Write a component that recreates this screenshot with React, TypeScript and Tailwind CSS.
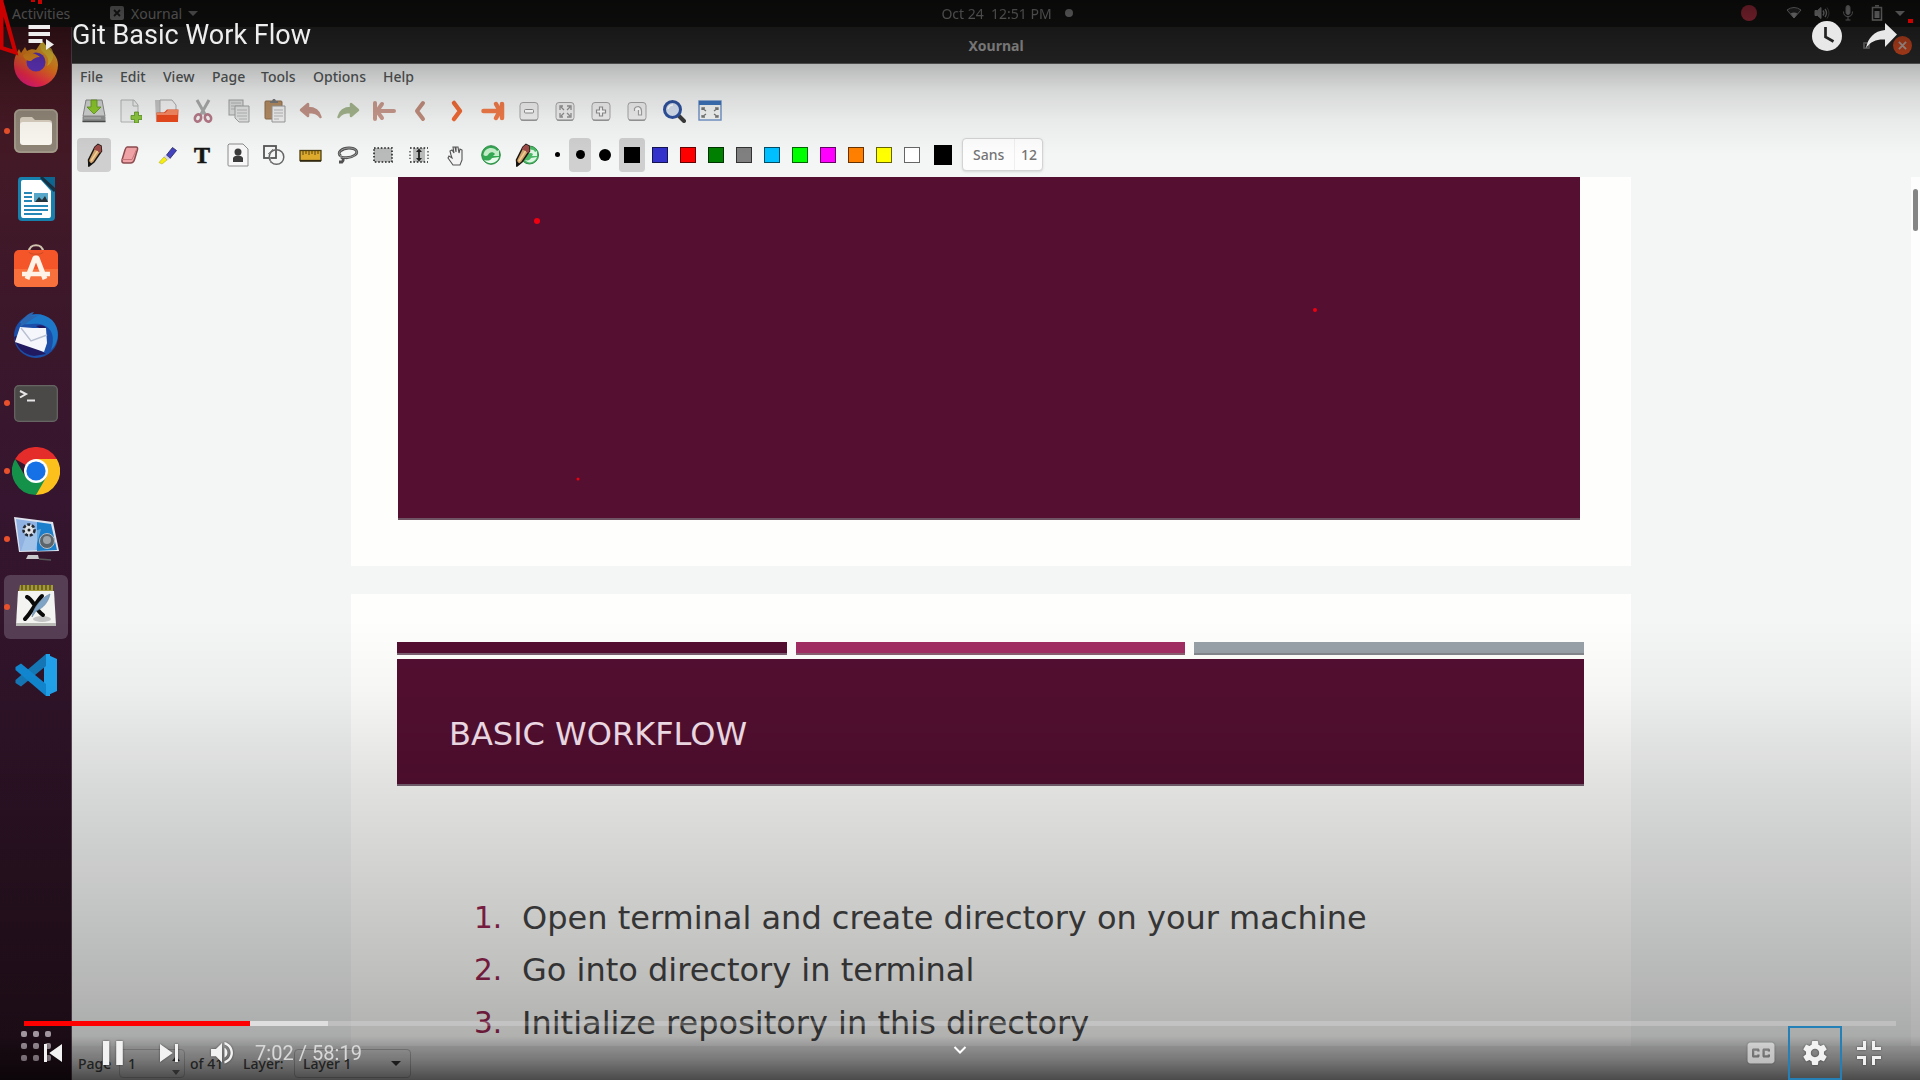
import React from "react";

type Kids = { children?: React.ReactNode };

/* ---------- dock ---------- */

const S = ({ size = 48, box = "0 0 48 48", children }: Kids & { size?: number; box?: string }) => (
  <svg width={size} height={size} viewBox={box} fill="none" className="shrink-0">
    {children}
  </svg>
);

const Firefox = () => (
  <S>
    <defs>
      <linearGradient id="ff" x1="0.8" y1="0" x2="0.3" y2="1">
        <stop offset="0" stopColor="#ffe14a" />
        <stop offset="0.45" stopColor="#ff8a1e" />
        <stop offset="0.8" stopColor="#ff2d50" />
        <stop offset="1" stopColor="#e01a80" />
      </linearGradient>
    </defs>
    <path d="M30 2c3 2 4 5 5 7 6 4 11 9 11 17a22 22 0 0 1-44 0c0-7 2-11 5-16l2 4 4-6 2 4c3-2 7-2 9-1 2-3 4-6 6-9z" fill="url(#ff)" />
    <circle cx="24" cy="23" r="9.5" fill="#6a3ad0" />
    <path d="M11 16c6-4 12-2 17 2-4 0-7 2-9 4-4 0-7-2-8-6z" fill="#ff9a22" />
    <path d="M30 3c-3 5-1 9 3 12 4 4 4 8 2 12 5-3 9-11 4-18-3-1-7-3-9-6z" fill="#ffd93a" opacity=".75" />
  </S>
);

const Files = () => (
  <S>
    <rect x="2" y="2" width="44" height="44" rx="6" fill="#8f8577" />
    <rect x="3" y="3" width="42" height="42" rx="5" fill="none" stroke="#a69d8e" strokeWidth="1.5" />
    <path d="M8 13q0-3 3-3h9l3 3h14q3 0 3 3v4H8z" fill="#d9cfc0" />
    <rect x="8" y="15" width="32" height="23" rx="3" fill="#fbf7f1" />
  </S>
);

const Writer = () => (
  <S>
    <path d="M9 2h22l12 13v27q0 4-4 4H10q-4 0-4-4V6q0-4 3-4z" fill="#1880ac" />
    <path d="M11 5h18l10 11v24q0 3-2 3H11q-2 0-2-3V7q0-2 2-2z" fill="#fff" />
    <path d="M31 2h12v11z" fill="#0d6690" />
    <path d="M29 2l14 14" stroke="#133244" strokeWidth="3" />
    <path d="M12 18h8M12 22h8M12 26h8M12 31h24M12 35h24M12 39h18" stroke="#2487b5" strokeWidth="2" />
    <rect x="22" y="18" width="14" height="9" fill="#57a8c8" />
    <path d="M23 27l4-5 3 3 3-4 3 6z" fill="#26343a" />
  </S>
);

const Software = () => (
  <S>
    <path d="M17 9c0-9 14-9 14 0" stroke="#cfc4ae" strokeWidth="2.2" />
    <rect x="2" y="7" width="44" height="37" rx="5" fill="#f4562a" />
    <path d="M2 26h44v13q0 5-5 5H7q-5 0-5-5z" fill="#f8713d" />
    <path d="M17 9c0 3 14 3 14 0" stroke="#c94a22" strokeWidth="1" />
    <path d="M15 36L23 15h2l8 21" stroke="#fff2e6" strokeWidth="5" strokeLinejoin="round" />
    <path d="M10 31h28" stroke="#fff2e6" strokeWidth="4.5" />
  </S>
);

const Thunderbird = () => (
  <S>
    <circle cx="24" cy="25" r="22" fill="#1b4ea8" />
    <path d="M8 12C14 2 30 0 40 9c8 8 8 22-1 30 4-11 2-22-8-25-8-3-15 1-23-2z" fill="#1d78c8" />
    <path d="M2 26c2 10 10 18 20 19l12-2-30-18z" fill="#221a60" />
    <path d="M24 15q8-2 10 2v4z" fill="#221a60" />
    <path d="M8 16l13 1 13 0 1 15-3 9L3 31z" fill="#f5f6fb" />
    <path d="M9 17l10 13 16-6" stroke="#b8bfd0" strokeWidth="1.4" />
    <path d="M8 16c2-9 8-14 14-15l-3 4c3 0 6-1 8-1-6 3-10 7-19 12z" fill="#2b66b0" />
  </S>
);

const Terminal = () => (
  <S>
    <rect x="2" y="6" width="44" height="37" rx="5" fill="#4b4948" />
    <rect x="2.7" y="6.7" width="42.6" height="35.6" rx="4.5" stroke="#676564" strokeWidth="1.2" />
    <path d="M8 12l6 3-6 3.500M15 21.500h8" stroke="#e6e6e6" strokeWidth="2" />
  </S>
);

const Chrome = () => (
  <S>
    <path d="M24 24L3.200 12A24 24 0 0 1 44.800 12z" fill="#e42c2b" />
    <path d="M24 24V12h20.800A24 24 0 0 1 24 48z" fill="#fcc01d" />
    <path d="M24 24L13.600 30 3.200 12A24 24 0 0 0 24 48l10.400-18z" fill="#15924a" />
    <circle cx="24" cy="24" r="12" fill="#fff" />
    <circle cx="24" cy="24" r="9.600" fill="#1671e6" />
  </S>
);

const Recorder = () => (
  <S>
    <path d="M2 2l39 5 6 29-40 1z" fill="#dfe3ee" />
    <path d="M4 4l21 3v28l-17 1z" fill="#8fb2e2" />
    <path d="M25 7l14 2 6 26-20 1z" fill="#1b7fcb" />
    <path d="M15 18l14-4-6 22H9z" fill="#b5d3f0" opacity=".5" />
    <circle cx="17" cy="15" r="5.500" fill="#dfe3e8" stroke="#232a33" strokeWidth="2.600" strokeDasharray="3 1.700" />
    <circle cx="17" cy="15" r="1.500" fill="#222" />
    <circle cx="35" cy="26" r="7.500" fill="#5c646c" stroke="#b9c0c6" />
    <circle cx="35" cy="25" r="4" fill="#9da5ab" />
    <path d="M16 40h10l1 4H14z" fill="#c9c9cc" />
    <path d="M27 44l12 1" stroke="#555" strokeWidth="1.500" />
  </S>
);

const XournalIcon = () => (
  <S>
    <path d="M6 8h36l2 34H4z" fill="#f3f3f2" />
    <path d="M4 40h40v3H4z" fill="#b9b9b6" />
    <path d="M8 2h33v6H7z" fill="#a59a3a" />
    <path d="M10 2v5M14 2v5M18 2v5M22 2v5M26 2v5M30 2v5M34 2v5M38 2v5" stroke="#575018" strokeWidth="1.400" />
    <ellipse cx="30" cy="36" rx="9" ry="3" fill="#c4c4c4" />
    <path d="M15 14c6 2 9 14 16 18M30 13c-6 6-10 16-17 23" stroke="#0a0a0a" strokeWidth="4" strokeLinecap="round" />
    <path d="M38 11c-2 9-7 14-14 17l-4 6c1-9 9-19 18-23z" fill="#7fa3c4" stroke="#6c8cab" strokeWidth=".7" />
  </S>
);

const VSCode = () => (
  <S>
    <path d="M34 3l11 5v32l-11 5-2-9V12z" fill="#22a4ee" />
    <path d="M34 3v12L9 35.500 3.500 32v-3z" fill="#1579b8" />
    <path d="M34 45V33L9 12.500 3.500 16v3z" fill="#1289d2" />
    <path d="M34 3v42l4 0V3z" fill="#22a4ee" />
  </S>
);

const dock: { icon: React.FC; dot?: boolean; active?: boolean }[] = [
  { icon: Firefox },
  { icon: Files, dot: true },
  { icon: Writer },
  { icon: Software },
  { icon: Thunderbird },
  { icon: Terminal, dot: true },
  { icon: Chrome, dot: true },
  { icon: Recorder, dot: true },
  { icon: XournalIcon, dot: true, active: true },
  { icon: VSCode },
];

const Dock = () => (
  <div className="flex w-[72px] shrink-0 flex-col border-r border-[#5f4a5a] bg-linear-to-b from-[#481a22] via-[#35152f] via-45% to-[#27121e] pt-[2px]">
    {dock.map(({ icon: Icon, dot, active }, i) => (
      <div key={i} className="flex h-[68px] w-full shrink-0 items-center justify-center">
        <div className={active ? "relative flex size-16 items-center justify-center rounded-md bg-[#563f54]" : "relative flex size-16 items-center justify-center"}>
          {dot && <span className="absolute top-[29px] left-0 size-1.5 rounded-full bg-[#e9502c]" />}
          <Icon />
        </div>
      </div>
    ))}
    <div className="mt-auto mb-[19px] grid grid-cols-3 gap-[6px] self-center">
      {Array.from({ length: 9 }, (_, i) => (
        <span key={i} className="size-1.5 rounded-[2px] bg-[#e6d6e2]" />
      ))}
    </div>
  </div>
);

/* ---------- toolbars ---------- */

const I = ({ children, dim }: Kids & { dim?: boolean }) => (
  <svg viewBox="0 0 24 24" fill="none" className={dim ? "size-6 opacity-60" : "size-6"}>
    {children}
  </svg>
);

const ZoomTile = ({ children }: Kids) => (
  <I>
    <rect x="3" y="3.500" width="18" height="18" rx="3" fill="#ececec" stroke="#a4a4a4" />
    <path d="M4 21h16" stroke="#888" />
    {children}
  </I>
);

const mainIcons: React.ReactNode[] = [
  <I>
    <path d="M4 1h16l3 16H1z" fill="#cfd1d0" stroke="#8a8a8a" />
    <rect x="0.500" y="17" width="23" height="6" rx="1" fill="#8f9190" />
    <path d="M0.500 22.500h23" stroke="#4c4e4e" strokeWidth="1.500" />
    <path d="M2 19h17" stroke="#bbb" />
    <path d="M9 1h6v7h4l-7 7-7-7h4z" fill="#8bc72c" stroke="#5d9415" strokeWidth=".8" />
  </I>,
  <I>
    <path d="M3 1h13l4 5v17H3z" fill="#eceeed" stroke="#b2b4b3" />
    <path d="M15 1v6h5" stroke="#b2b4b3" />
    <path d="M16.500 13h4v3.500H24v4h-3.500V24h-4v-3.500H13v-4h3.500z" fill="#8cc63f" stroke="#4e8a12" strokeWidth=".7" />
  </I>,
  <I>
    <path d="M0 1h7v22H1z" fill="#c4c4c4" />
    <path d="M5 1h12l4 5v8H5z" fill="#f2f2f2" stroke="#aaa" />
    <path d="M1.500 13.500H9l3-3h11.500L23 23H1.500z" fill="#ea4a1e" />
    <path d="M2 14h8l3-3h10l-.5 5H2z" fill="#f78a62" />
  </I>,
  <I dim>
    <path d="M6 1l9 16M18 1L9 17" stroke="#777" strokeWidth="3" />
    <ellipse cx="7" cy="19" rx="3" ry="3.700" stroke="#8c2740" strokeWidth="2.600" transform="rotate(20 7 19)" />
    <ellipse cx="17" cy="19" rx="3" ry="3.700" stroke="#8c2740" strokeWidth="2.600" transform="rotate(-20 17 19)" />
  </I>,
  <I dim>
    <rect x="2" y="1" width="14" height="15" fill="#c9cbca" stroke="#666" />
    <path d="M4 4h10M4 7h10M4 10h4" stroke="#888" />
    <path d="M8 7h14v16H12l-4-4z" fill="#d5d7d6" stroke="#666" />
    <path d="M10 11h10M10 14h10M10 17h10M12 20h8" stroke="#888" />
  </I>,
  <I>
    <rect x="2" y="2" width="17" height="18" rx="1" fill="#b28b62" stroke="#8d6d4c" />
    <path d="M7 4V2h2l1-2h2l1 2h2v2z" fill="#777" />
    <path d="M9 7h13v16H9z" fill="#eeefee" stroke="#999" />
    <path d="M11 11h9M11 14h9M11 17h9M11 20h5" stroke="#b5b5b5" />
  </I>,
  <I>
    <path d="M2 11L9 5v4c8 0 11 3 12.500 9-2-3-5-5-12.500-5v4z" fill="#c09186" stroke="#c09186" strokeWidth="2.500" strokeLinejoin="round" />
  </I>,
  <I>
    <path d="M22 11L15 5v4C7 9 4 12 2.500 18c2-3 5-5 12.500-5v4z" fill="#a3b38c" stroke="#a3b38c" strokeWidth="2.500" strokeLinejoin="round" />
  </I>,
  <I>
    <path d="M3 4v16M10 5L5 12l5 7M6 12h16" stroke="#c7988c" strokeWidth="4" strokeLinecap="round" strokeLinejoin="round" />
  </I>,
  <I>
    <path d="M15 4l-6 8 6 8" stroke="#bf8c7c" strokeWidth="4" strokeLinecap="round" strokeLinejoin="round" />
  </I>,
  <I>
    <path d="M10 4l6 8-6 8" stroke="#ee6a35" strokeWidth="4.500" strokeLinecap="round" strokeLinejoin="round" />
  </I>,
  <I>
    <path d="M21 5v14M15 5l4 7-4 7M2.500 12H17" stroke="#f07a48" strokeWidth="4.500" strokeLinecap="round" strokeLinejoin="round" />
  </I>,
  <ZoomTile>
    <rect x="7.500" y="10.500" width="9" height="3.500" rx="1" fill="#fff" stroke="#8f8f8f" />
  </ZoomTile>,
  <ZoomTile>
    <path d="M7 11V7h3M14 7h4v4M18 14v4h-4M10 18H7v-4M8 8l3 3M17 8l-3 3M17 17l-3-3M8 17l3-3" stroke="#8f8f8f" strokeWidth="1.300" />
  </ZoomTile>,
  <ZoomTile>
    <path d="M10.500 8h3v3h3v3h-3v3h-3v-3h-3v-3h3z" fill="#fff" stroke="#8f8f8f" strokeWidth="1.200" />
  </ZoomTile>,
  <ZoomTile>
    <path d="M9.500 12V9.500q1-2 4-2 3 1 3 4.500v4h-3v-5" fill="#fff" stroke="#a0a0a0" strokeWidth="1.200" />
  </ZoomTile>,
  <I>
    <path d="M16 16l6 6" stroke="#3b3b3b" strokeWidth="4" strokeLinecap="round" />
    <circle cx="10.500" cy="10.500" r="8" fill="#d5dfee" stroke="#2f529d" strokeWidth="3" />
    <path d="M6 10q1-4 5-4" stroke="#fff" strokeWidth="1.500" />
  </I>,
  <I>
    <rect x="1" y="2" width="22" height="19" fill="#f2f4f4" stroke="#6b8fc4" strokeWidth="1.400" />
    <rect x="1" y="2" width="22" height="4" fill="#3d72b8" />
    <path d="M4 11V9h3M4 9l4 3M20 11V9h-3M20 9l-4 3M4 16v2h3M4 18l4-3M20 16v2h-3M20 18l-4-3" stroke="#777" strokeWidth="1.300" />
  </I>,
];

const Pencil = () => (
  <>
    <path d="M13 4l3-2.500 3 1.500.5 5L12 19l-5 4-.5-6z" fill="#cfa06a" stroke="#1d1712" strokeWidth="1.500" />
    <path d="M13 4l3-2.500 3 1.500.5 5-1.500 2-6-4z" fill="#9c4a48" />
    <path d="M6.500 18l3.500 3-4 2.500z" fill="#111" />
    <path d="M15.500 8L9 18" stroke="#f0cf94" strokeWidth="1.500" />
  </>
);

const toolIcons: React.ReactNode[] = [
  <I>
    <Pencil />
  </I>,
  <I>
    <path d="M9 4h9q2 0 1.500 2.500l-3 10q-1 3.500-4 3.500H6q-2.500 0-2-3l3-10q1-3 2-3z" fill="#efa3a6" stroke="#8c4b4f" strokeWidth="1.500" />
    <path d="M4 16.500h10l4.500-10" stroke="#c8757a" />
  </I>,
  <I>
    <path d="M12.500 12l6-7.500 4 3-6.500 8z" fill="#4444c0" stroke="#23235f" strokeWidth=".8" />
    <path d="M11 12l5 3.500-2.500 2-4.500-3z" fill="#d7d7e8" />
    <path d="M5 19.500l5-5.500 3 3-5 4z" fill="#f5ee10" stroke="#b5ad1a" strokeWidth=".6" />
  </I>,
  <I>
    <text x="12" y="20" textAnchor="middle" fontFamily="Liberation Serif, serif" fontWeight="700" fontSize="24" fill="#151515" stroke="#151515" strokeWidth=".6">
      T
    </text>
  </I>,
  <I>
    <path d="M3 1h14l5 5v17H3q-1 0-1-1V2z" fill="#f7f7f7" stroke="#8c8c8c" />
    <circle cx="12" cy="9" r="3.500" fill="#3c3c3c" />
    <path d="M7 19v-4q1-2.500 5-2.500t5 2.500v4z" fill="#3c3c3c" />
  </I>,
  <I>
    <rect x="2" y="3" width="12" height="12" stroke="#555" strokeWidth="1.800" />
    <circle cx="14.500" cy="14" r="7.300" stroke="#666" strokeWidth="1.500" />
    <path d="M6 11l5-5M9 20l-1-6" stroke="#888" />
  </I>,
  <I>
    <rect x="1" y="7.500" width="21" height="10" fill="#dcaa2c" stroke="#4d4118" strokeWidth="1.300" />
    <path d="M4 8v4M7 8v3M10 8v4M13 8v3M16 8v4M19 8v3" stroke="#5a4612" />
    <path d="M1 18h21" stroke="#2b220b" strokeWidth="1.500" />
  </I>,
  <I>
    <path d="M6 13c-5-3 1-8 8-8s10 4 6 7-10 3-14 2q4 2 1 5l-3 0" stroke="#505050" strokeWidth="2.800" />
    <path d="M6 13c-5-3 1-8 8-8s10 4 6 7-10 3-14 2" stroke="#b0b0b0" strokeWidth=".8" />
  </I>,
  <I>
    <rect x="3" y="5" width="18" height="14" fill="#b9bbba" stroke="#222" strokeWidth="1.600" strokeDasharray="1.600 1.800" />
  </I>,
  <I>
    <rect x="6" y="5" width="12" height="14" fill="#b9bbba" />
    <path d="M3 5h18M3 19h18" stroke="#222" strokeWidth="1.600" strokeDasharray="1.600 1.800" />
    <path d="M3 8v8M21 8v8" stroke="#666" strokeWidth="1.600" strokeDasharray="1.600 1.800" />
    <path d="M12 7v10" stroke="#222" strokeWidth="1.800" />
    <path d="M12 5.500l3 3.500H9zM12 18.500l3-3.500H9z" fill="#222" />
  </I>,
  <I>
    <path d="M8 12l-1-4 2-1 2 3-1-6 2 0 1 5 0-5h2l1 6 1-4 2 1v10l-2 5H10l-5-7 1-2 3 2z" fill="#f3f3f3" stroke="#555" strokeWidth="1.100" />
  </I>,
  <I>
    <circle cx="12" cy="12" r="9.300" fill="#35a853" stroke="#2c8a45" />
    <path d="M4.500 12C5 4 15 3 18 8l2-1v6h-6l2-2c-2-3-6-2-7 1q-2 2-4.500 0z" fill="#c4ecc9" />
    <path d="M20 14c-2 7-11 8-15 3 4 1 6 1 8-2z" fill="#eafbee" />
  </I>,
  <I>
    <circle cx="14.500" cy="12" r="9" fill="#4ab866" stroke="#2c8a45" />
    <path d="M9 12c1-6 9-7 11-3l2-1v5h-5l1-2c-2-2-5-1-6 1zM22 14c-2 6-9 7-12 3 3 1 5 0 6-2z" fill="#dff5e3" />
    <g transform="translate(-5 0)">
      <Pencil />
    </g>
  </I>,
];

const swatches = [
  "bg-black",
  "bg-[#3333cc]",
  "bg-[#ff0000]",
  "bg-[#008000]",
  "bg-[#808080]",
  "bg-[#00c0ff]",
  "bg-[#00ff00]",
  "bg-[#ff00ff]",
  "bg-[#ff8000]",
  "bg-[#ffff00]",
  "bg-white",
];

const menus: [string, string][] = [
  ["File", "w-[40px]"],
  ["Edit", "w-[43px]"],
  ["View", "w-[49px]"],
  ["Page", "w-[49px]"],
  ["Tools", "w-[52px]"],
  ["Options", "w-[70px]"],
  ["Help", "w-[50px]"],
];

const Toolbars = () => (
  <div className="flex h-[113px] shrink-0 flex-col bg-[#f4f6f5]">
    <div className="flex h-[26px] items-center pb-[2px] pl-2 text-[14px] font-medium text-[#55595a]">
      {menus.map(([m, w]) => (
        <span key={m} className={w}>
          {m}
        </span>
      ))}
    </div>
    <div className="flex h-[42px] items-center pb-px pl-[4px]">
      {mainIcons.map((ic, i) => (
        <span key={i} className="flex w-[36.230px] justify-center">
          {ic}
        </span>
      ))}
    </div>
    <div className="flex h-[45px] items-center pl-[4px]">
      {toolIcons.map((ic, i) => (
        <span key={i} className="flex w-[36.080px] justify-center">
          <span className={i === 0 ? "flex h-[34px] w-[34px] items-center justify-center rounded bg-[#cfcfcf]" : "flex h-[34px] w-[34px] items-center justify-center"}>{ic}</span>
        </span>
      ))}
      <span className="flex w-6 justify-center">
        <span className="size-[5px] rounded-full bg-black" />
      </span>
      <span className="flex h-[34px] w-[22px] items-center justify-center rounded bg-[#d0d0d0]">
        <span className="size-[9px] rounded-full bg-black" />
      </span>
      <span className="flex w-[27px] justify-center">
        <span className="size-3 rounded-full bg-black" />
      </span>
      {swatches.map((c, i) => (
        <span key={c} className={i === 0 ? "flex h-[34px] w-[28px] items-center justify-center rounded border-x border-[#f4f6f5] bg-[#cfcfcf]" : "flex h-[34px] w-[28px] items-center justify-center"}>
          <span className={`size-4 border border-black/60 ${c}`} />
        </span>
      ))}
      <span className="ml-2 h-5 w-[18px] bg-black" />
      <div className="ml-[10px] flex h-[33px] w-[81px] items-center rounded border border-[#d4d4d4] bg-[#fdfdfd] text-[14px] font-medium text-[#747474] shadow-sm">
        <span className="flex h-full w-[52px] items-center border-r border-[#efefef] pl-[10px]">Sans</span>
        <span className="pl-[6px]">12</span>
      </div>
    </div>
  </div>
);

/* ---------- slides ---------- */

const steps = [
  "Open terminal and create directory on your machine",
  "Go into directory in terminal",
  "Initialize repository in this directory",
];

const Slides = () => (
  <div className="flex min-h-0 flex-1 overflow-hidden bg-[#f4f6f5]">
    <div className="ml-[279px] flex w-[1280px] shrink-0 flex-col gap-[28px] font-['DejaVu_Sans',sans-serif]">
      <div className="h-[389px] shrink-0 bg-[#fefefd]">
        <div className="ml-[47px] h-[343px] w-[1182px] border-b-2 border-[#6f5564] bg-[#540f31]" />
      </div>
      <div className="flex h-[600px] shrink-0 flex-col bg-[#fefefd] pt-[48px] pl-[46px]">
        <div className="flex h-[13px] w-[1187px] gap-[9px]">
          <span className="flex-1 border-b-2 border-[#7a6070] bg-[#540f31]" />
          <span className="flex-1 border-b-2 border-[#8a6070] bg-[#a22e63]" />
          <span className="flex-1 border-b-2 border-[#84888c] bg-[#98a0a8]" />
        </div>
        <div className="mt-[4px] flex h-[127px] w-[1187px] items-center border-b-2 border-[#7a6474] bg-[#540f31] pt-[25px] pl-[52px] text-[32px] leading-none text-[#fbe6f2]">
          BASIC WORKFLOW
        </div>
        <ol className="mt-[106px] flex flex-col pl-[77px] text-[32px] leading-[52.300px] text-[#444444]">
          {steps.map((s, i) => (
            <li key={s} className="flex">
              <span className="w-[48px] text-[29.500px] text-[#962550]">{i + 1}.</span>
              <span className="whitespace-nowrap">{s}</span>
            </li>
          ))}
        </ol>
      </div>
    </div>
    <div className="ml-auto w-[9px] shrink-0 bg-[#fdfdfd] pt-[12px] pl-[2px]">
      <div className="h-[42px] w-[5px] rounded-full bg-[#858585]" />
    </div>
  </div>
);

const StatusBar = () => (
  <div className="flex h-[34px] shrink-0 items-center bg-[#eeefee] pt-px pl-[6px] text-[14px] font-medium text-[#4a4a4a]">
    <span className="w-[41px]">Page</span>
    <div className="flex h-[29px] w-[66px] items-center justify-between rounded border border-[#c4c4c4] px-[8px]">
      <span>1</span>
      <span className="-mr-[4px] flex translate-y-[2px] flex-col gap-[9px]">
        <span className="border-x-4 border-b-5 border-x-transparent border-b-[#444]" />
        <span className="border-x-4 border-t-5 border-x-transparent border-t-[#777]" />
      </span>
    </div>
    <span className="ml-[5px] w-[53px]">of 41</span>
    <span className="w-[51px]">Layer:</span>
    <div className="flex h-[29px] w-[117px] items-center justify-between rounded border border-[#bdbdbd] pr-[9px] pl-2">
      <span>Layer 1</span>
      <span className="border-x-5 border-t-5 border-x-transparent border-t-[#3c3c3c]" />
    </div>
  </div>
);

/* ---------- desktop ---------- */

const TopBar = () => (
  <div className="grid h-[27px] shrink-0 grid-cols-[1fr_auto_1fr] items-center bg-[#191817] pb-px text-[14px] text-[#9b9b9b]">
    <div className="flex items-center pl-3">
      <span className="w-[98px]">Activities</span>
      <span className="mr-[7px] flex size-[14px] items-center justify-center rounded-[2px] bg-[#8a8a8a]">
        <svg viewBox="0 0 10 10" className="size-[10px]">
          <path d="M2 2l6 6M8 2L2 8" stroke="#222" strokeWidth="1.800" />
        </svg>
      </span>
      <span>Xournal</span>
      <span className="ml-[6px] border-x-5 border-t-5 border-x-transparent border-t-[#8d8d8d]" />
    </div>
    <div className="flex translate-x-[47px] items-center">
      <span className="whitespace-pre">Oct 24&nbsp; 12:51 PM</span>
      <span className="ml-[13px] size-2 rounded-full bg-[#a0a0a0]" />
    </div>
    <div className="flex items-center justify-end pr-[15px]">
      <span className="mr-[29px] size-4 rounded-full bg-[#c8384c]" />
      <svg viewBox="0 0 16 14" className="mr-[12px] h-[14px] w-4">
        <path d="M1 4Q8-1 15 4L8 12z" fill="#333" stroke="#aaa" />
        <path d="M4.500 7.500q3.500-2 7 0L8 12z" fill="#bbb" />
      </svg>
      <svg viewBox="0 0 16 14" className="mr-[12px] h-[14px] w-4" fill="none" stroke="#aaa">
        <path d="M1 4.500h2.500L7 1.500v11L3.500 9.500H1z" fill="#aaa" />
        <path d="M9 4.500q2 2.500 0 5M11 3q3 4 0 8" strokeWidth="1.300" />
        <path d="M13 1.500q4 5.500 0 11" opacity=".5" />
      </svg>
      <svg viewBox="0 0 12 16" className="mr-[17px] h-4 w-3" fill="none" stroke="#999">
        <rect x="4" y="0.500" width="4" height="9" rx="2" fill="#aaa" />
        <path d="M1.500 6.500q0 5 4.500 5t4.500-5M6 11.500V15M3.500 15h5" />
      </svg>
      <svg viewBox="0 0 12 16" className="mr-[12px] h-4 w-3" fill="none" stroke="#aaa">
        <path d="M4 0.800h4M1.500 2.500h9v12.500h-9z" strokeWidth="1.500" />
        <path d="M3.500 6h5v7h-5z" fill="#aaa" stroke="none" />
      </svg>
      <span className="border-x-5 border-t-5 border-x-transparent border-t-[#aaa]" />
    </div>
  </div>
);

const TitleBar = () => (
  <div className="relative flex h-[37px] shrink-0 items-center justify-center border-b border-[#656565] bg-[#2d2c2c] text-[14px] font-bold text-[#b5b5b5]">
    <span>Xournal</span>
    <div className="absolute top-[9px] right-[8px] flex items-center gap-[23px]">
      <span className="size-[7px] rounded-[1px] border-2 border-[#777]" />
      <span className="flex size-[19px] items-center justify-center rounded-full bg-[#df4f24]">
        <svg viewBox="0 0 10 10" className="size-[9px]">
          <path d="M1 1l8 8M9 1L1 9" stroke="#d8c0b8" strokeWidth="2" />
        </svg>
      </span>
    </div>
  </div>
);

/* Pen strokes drawn freehand over the desktop. */
const PenMarks = () => (
  <svg viewBox="0 0 1920 1080" className="absolute inset-0 size-full" fill="none">
    <path d="M1 0L15.500 52.500 1.500 48V0" stroke="#cb0000" strokeWidth="4" />
    <rect x="31" y="-1" width="4" height="3" fill="#cb0000" />
    <rect x="38" y="-1" width="4" height="5" fill="#cb0000" />
    <rect x="1908" y="19" width="5" height="4" fill="#cb0000" />
    <circle cx="537" cy="221" r="3" fill="#ee0010" />
    <circle cx="1315" cy="310" r="2" fill="#ee0010" />
    <circle cx="578" cy="479" r="1.500" fill="#ee0010" />
  </svg>
);

/* ---------- player ---------- */

const P = ({ d, dim, evenOdd }: { d: string; dim?: boolean; evenOdd?: boolean }) => (
  <svg viewBox="0 0 36 36" className={dim ? "size-[54px] opacity-60 drop-shadow-[0_0_1px_rgba(0,0,0,0.5)]" : "size-[54px] drop-shadow-[0_0_1px_rgba(0,0,0,0.5)]"}>
    <path d={d} fill="#f2f2f2" fillRule={evenOdd ? "evenodd" : "nonzero"} />
  </svg>
);

const CC =
  "M11,11 C9.89,11 9,11.9 9,13 L9,23 C9,24.1 9.89,25 11,25 L25,25 C26.1,25 27,24.1 27,23 L27,13 C27,11.9 26.1,11 25,11 L11,11 Z M17,17 L15.5,17 L15.5,16.5 L13.5,16.5 L13.5,19.5 L15.5,19.5 L15.5,19 L17,19 L17,20 C17,20.55 16.55,21 16,21 L13,21 C12.45,21 12,20.55 12,20 L12,16 C12,15.45 12.45,15 13,15 L16,15 C16.55,15 17,15.45 17,16 L17,17 Z M24,17 L22.5,17 L22.5,16.5 L20.5,16.5 L20.5,19.5 L22.5,19.5 L22.5,19 L24,19 L24,20 C24,20.55 23.55,21 23,21 L20,21 C19.45,21 19,20.55 19,20 L19,16 C19,15.45 19.45,15 20,15 L23,15 C23.55,15 24,15.45 24,16 L24,17 Z";
const GEAR =
  "m 23.94,18.78 c .03,-0.25 .05,-0.51 .05,-0.78 0,-0.27 -0.02,-0.52 -0.05,-0.78 l 1.68,-1.32 c .15,-0.12 .19,-0.33 .09,-0.51 l -1.6,-2.76 c -0.09,-0.17 -0.31,-0.24 -0.48,-0.17 l -1.99,.8 c -0.41,-0.32 -0.86,-0.58 -1.35,-0.78 l -0.30,-2.12 c -0.02,-0.19 -0.19,-0.33 -0.39,-0.33 l -3.2,0 c -0.2,0 -0.36,.14 -0.39,.33 l -0.30,2.12 c -0.48,.2 -0.93,.47 -1.35,.78 l -1.99,-0.8 c -0.18,-0.07 -0.39,0 -0.48,.17 l -1.6,2.76 c -0.10,.17 -0.05,.39 .09,.51 l 1.68,1.32 c -0.03,.25 -0.05,.52 -0.05,.78 0,.26 .02,.52 .05,.78 l -1.68,1.32 c -0.15,.12 -0.19,.33 -0.09,.51 l 1.6,2.76 c .09,.17 .31,.24 .48,.17 l 1.99,-0.8 c .41,.32 .86,.58 1.35,.78 l .30,2.12 c .02,.19 .19,.33 .39,.33 l 3.2,0 c .2,0 .36,-0.14 .39,-0.33 l .30,-2.12 c .48,-0.2 .93,-0.47 1.35,-0.78 l 1.99,.8 c .18,.07 .39,0 .48,-0.17 l 1.6,-2.76 c .09,-0.17 .05,-0.39 -0.09,-0.51 l -1.68,-1.32 0,0 z m -5.94,2.01 c -1.54,0 -2.8,-1.25 -2.8,-2.8 0,-1.54 1.25,-2.8 2.8,-2.8 1.54,0 2.8,1.25 2.8,2.8 0,1.54 -1.25,2.8 -2.8,2.8 l 0,0 z";
const EXIT =
  "m14,14-4,0 0,2 6,0 0,-6 -2,0 0,4z m8,0 0,-4 -2,0 0,6 6,0 0,-2 -4,0z m-2,12 2,0 0,-4 4,0 0,-2 -6,0 0,6z M10,22l4,0 0,4 2,0 0,-6 -6,0 0,2z";
const VOLUME =
  "M8,21 L12,21 L17,26 L17,10 L12,15 L8,15 L8,21 Z M19,14 L19,22 C20.48,21.32 21.5,19.77 21.5,18 C21.5,16.26 20.48,14.74 19,14 Z M19,11.29 C21.89,12.15 24,14.83 24,18 C24,21.17 21.89,23.85 19,24.71 L19,26.77 C23.01,25.86 26,22.28 26,18 C26,13.72 23.01,10.14 19,9.23 L19,11.29 Z";

const Player = () => (
  <div className="absolute inset-0 flex flex-col justify-between font-[Roboto,sans-serif] text-[#eeeeee]">
    <div className="flex h-[56px] items-center pl-[28px]">
      <svg viewBox="0 0 27 27" className="mt-[21px] size-[27px] shrink-0" fill="#eeeeee">
        <path d="M0.500 0h21.500v4H0.500zM0.500 7h21.500v4H0.500zM0.500 14h14v4h-14zM18 14l8 5.500-8 5.500z" />
      </svg>
      <div className="ml-[17px] pt-[14px] text-[27px] leading-none">Git Basic Work Flow</div>
      <div className="mr-[23px] ml-auto flex items-center gap-[24px] pt-[15px]">
        <svg viewBox="0 0 30 30" className="size-[30px]">
          <circle cx="15" cy="15" r="15" fill="#e8e8e8" />
          <path d="M13.500 6v10l8 4.500" fill="none" stroke="#222" strokeWidth="2.700" />
        </svg>
        <svg viewBox="0 0 31 25" className="h-[25px] w-[31px]">
          <path d="M19 0l12 11.500L19 24v-7.500C11 16 5 18 0 25 2 15 8 8 19 7z" fill="#e8e8e8" />
        </svg>
      </div>
    </div>
    <div className="flex flex-col px-6">
      <div className="flex h-[5px] bg-white/20">
        <div className="w-[226px] bg-[#ff0000]" />
        <div className="w-[78px] bg-white/50" />
      </div>
      <div className="relative flex h-[54px] items-center">
        <span className="ml-[2px] w-[59px] shrink-0">
          <P d="m12,12h2v12h-2z m3.500,6 8.500,6V12z" />
        </span>
        <span className="w-[57px] shrink-0">
          <P d="M12,26 16.200,26 16.200,10 12,10z M20.800,26 25.200,26 25.200,10 20.800,10z" />
        </span>
        <span className="w-[69px] shrink-0">
          <P d="M12,24 20.500,18 12,12V24z M22,12v12h2V12h-2z" />
        </span>
        <svg viewBox="8 9.230 18 17.540" className="h-[21.400px] w-[22px] drop-shadow-[0_0_1px_rgba(0,0,0,0.5)]">
          <path d={VOLUME} fill="#f2f2f2" />
        </svg>
        <span className="ml-[22px] text-[20px] leading-none tracking-[0.04px] text-[#d8d8d8]">7:02 / 58:19</span>
        <svg viewBox="0 0 14 8" className="absolute top-[20px] left-[929px] h-2 w-[14px]" fill="none">
          <path d="M1.500 1l5.500 5.500L12.500 1" stroke="#fff" strokeWidth="2" />
        </svg>
        <div className="ml-auto flex">
          <P d={CC} dim evenOdd />
          <span className="relative size-[54px] border-2 border-[#2580b8]">
            <span className="-m-[2px] block">
              <P d={GEAR} evenOdd />
            </span>
          </span>
          <P d={EXIT} />
        </div>
      </div>
    </div>
  </div>
);

export default function App() {
  return (
    <div className="relative h-[1080px] w-[1920px] overflow-hidden bg-[#111] font-['Noto_Sans','Open_Sans',sans-serif]">
      <div className="flex h-full flex-col blur-[0.6px]">
        <TopBar />
        <div className="flex min-h-0 flex-1">
          <Dock />
          <div className="flex min-w-0 flex-1 flex-col">
            <TitleBar />
            <Toolbars />
            <Slides />
            <StatusBar />
          </div>
        </div>
      </div>
      <div className="absolute inset-x-0 top-0 h-[160px] bg-[linear-gradient(to_bottom,rgba(0,0,0,0.6)_0px,rgba(0,0,0,0.25)_64px,rgba(0,0,0,0.12)_90px,rgba(0,0,0,0.045)_120px,transparent_155px)]" />
      <div className="absolute inset-x-0 bottom-0 h-[460px] bg-[linear-gradient(to_bottom,transparent_0px,rgba(0,0,0,0.03)_70px,rgba(0,0,0,0.11)_160px,rgba(0,0,0,0.18)_260px,rgba(0,0,0,0.25)_360px,rgba(0,0,0,0.3)_416px,rgba(0,0,0,0.4)_426px,rgba(0,0,0,0.5)_440px,rgba(0,0,0,0.69)_460px)]" />
      <PenMarks />
      <Player />
    </div>
  );
}
